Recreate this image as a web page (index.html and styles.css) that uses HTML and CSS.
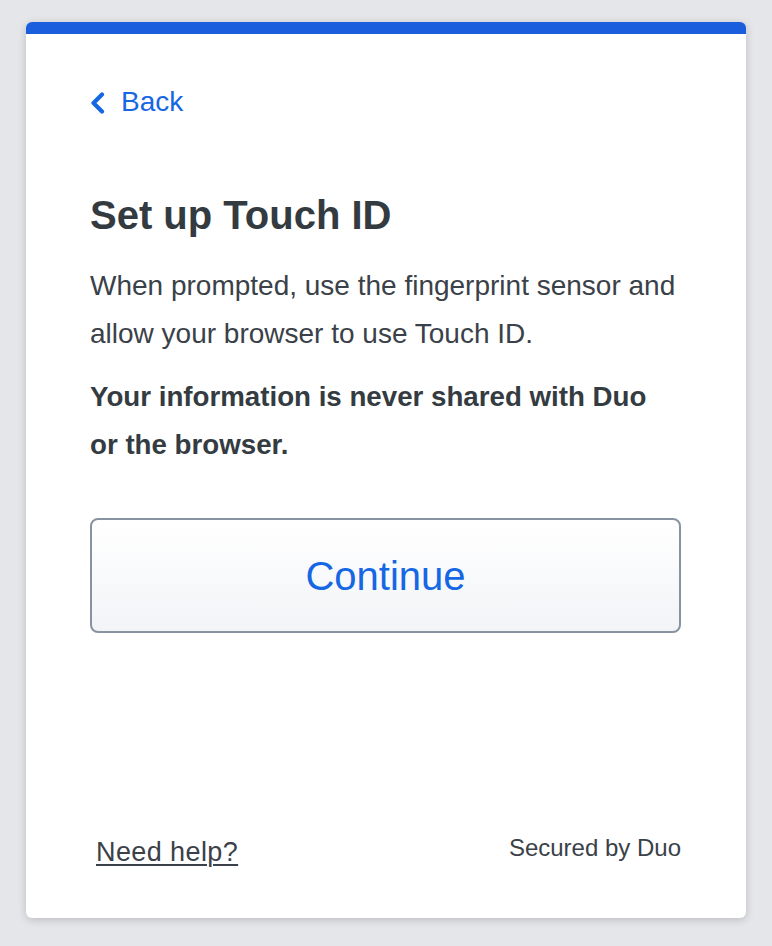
FILE: index.html
```html
<!DOCTYPE html>
<html lang="en">

<head>
    <meta charset="UTF-8">
    <meta name="viewport" content="width=device-width, initial-scale=1.0">
    <title>Set up Touch ID</title>
    <link rel="stylesheet" href="styles.css">
</head>

<body>
    <div class="card">
        <a class="back" href="#">
            <svg class="chevron" width="15" height="22" viewBox="0 0 15 22">
                <polyline points="12,2.5 3.5,11 12,19.5" fill="none" stroke="#1667e3" stroke-width="4.2" stroke-linecap="round" stroke-linejoin="round" />
            </svg>
            <span>Back</span>
        </a>

        <h1>Set up Touch ID</h1>
        <p class="intro">When prompted, use the fingerprint sensor and allow your browser to use Touch ID.</p>
        <p class="note">Your information is never shared with Duo or the browser.</p>

        <button class="continue">Continue</button>

        <div class="footer">
            <a class="help" href="#">Need help?</a>
            <span class="secured">Secured by Duo</span>
        </div>
    </div>
</body>

</html>
```

FILE: styles.css
```css
* {
    box-sizing: border-box;
}

body {
    font-family: "Liberation Sans", Arial, sans-serif;
    background-color: #e5e6ea;
    color: #3a4148;
    margin: 0;
    padding: 22px 26px;
}

.card {
    width: 720px;
    height: 896px;
    background-color: #fff;
    border-top: 12px solid #1a5ddd;
    border-radius: 6px;
    box-shadow: 0 2px 8px rgba(0, 0, 0, 0.18);
    padding: 48px 65px 50px 64px;
    display: flex;
    flex-direction: column;
}

.back {
    display: flex;
    align-items: center;
    gap: 16px;
    font-size: 28px;
    line-height: 40px;
    color: #1667e3;
    text-decoration: none;
    align-self: flex-start;
}

.chevron {
    margin-top: 1px;
}

h1 {
    margin: 69px 0 0;
    font-size: 40px;
    line-height: 48px;
    font-weight: bold;
    color: #333b41;
}

.intro,
.note {
    font-size: 28px;
    line-height: 48px;
    margin: 0;
}

.intro {
    margin-top: 23px;
}

.note {
    margin-top: 15px;
    font-size: 27.7px;
    font-weight: bold;
    color: #343b41;
}

.continue {
    margin-top: 49px;
    height: 115px;
    width: 100%;
    border: 2px solid #8893a1;
    border-radius: 8px;
    background: linear-gradient(#ffffff, #f2f4f7);
    color: #1667e3;
    font-family: inherit;
    font-size: 40px;
    line-height: 48px;
    cursor: pointer;
}

.footer {
    margin-top: auto;
    display: flex;
    justify-content: space-between;
    align-items: flex-start;
    font-size: 24px;
    line-height: 32px;
}

.help {
    padding: 4px 0 0 6px;
    font-size: 27px;
    color: #3a4148;
    letter-spacing: 0.4px;
    text-decoration: underline;
    text-underline-offset: 3px;
    text-decoration-thickness: 2px;
}

.secured {
    color: #3a4148;
}
```
